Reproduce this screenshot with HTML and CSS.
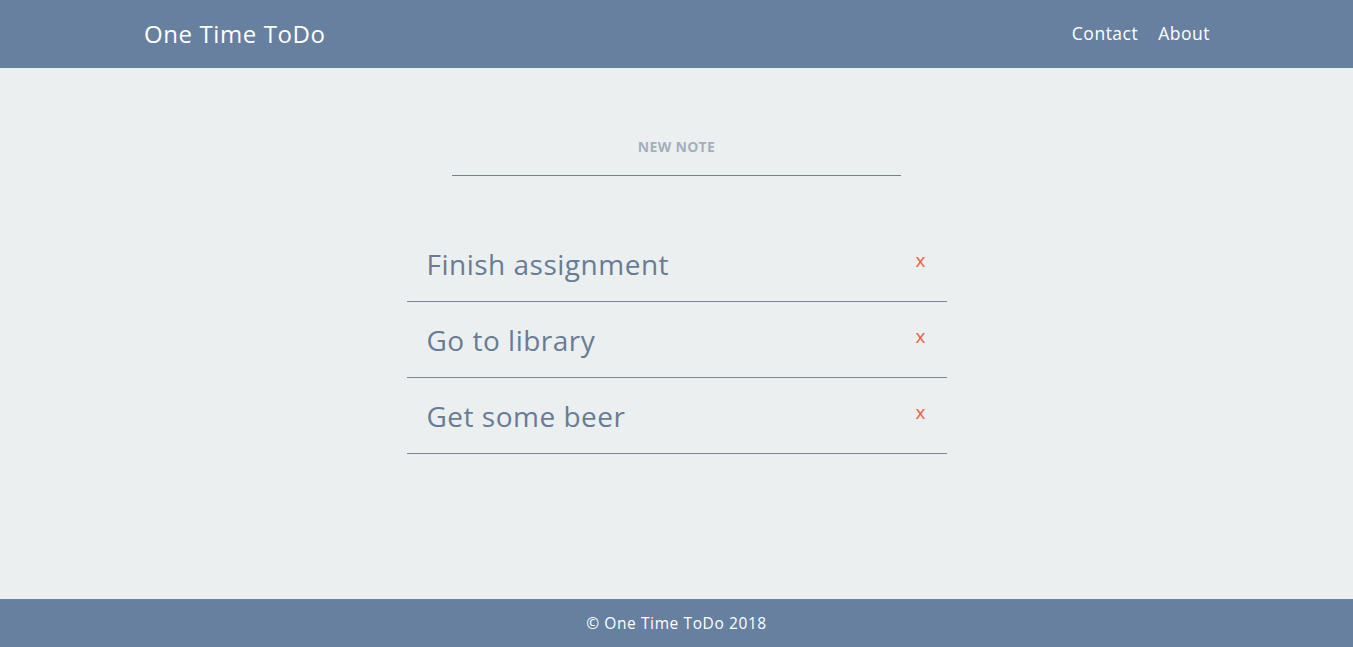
FILE: index.html
```html
<!DOCTYPE html>
<html>
<head>
<meta charset="utf-8">
<link rel="stylesheet" href="styles.css">
</head>
<body>
<header class="topbar">
  <div class="brand">One Time ToDo</div>
  <nav class="nav">
    <a class="nav-link">Contact</a>
    <a class="nav-link">About</a>
  </nav>
</header>
<main class="main">
  <div class="new-note">
    <div class="new-note-input">NEW NOTE</div>
  </div>
  <ul class="todo-list">
    <li class="todo-item"><span class="todo-text">Finish assignment</span><span class="todo-remove">x</span></li>
    <li class="todo-item"><span class="todo-text">Go to library</span><span class="todo-remove">x</span></li>
    <li class="todo-item"><span class="todo-text">Get some beer</span><span class="todo-remove">x</span></li>
  </ul>
</main>
<footer class="footer">© One Time ToDo 2018</footer>
</body>
</html>
```
FILE: styles.css
```css
* { box-sizing: border-box; }
html, body { margin: 0; padding: 0; height: 100%; }
body {
  font-family: "Open Sans", "DejaVu Sans", sans-serif;
  background: #ebeff0;
  display: flex;
  flex-direction: column;
  min-height: 647px;
}
.topbar {
  height: 68px;
  background: #67809f;
  display: flex;
  align-items: center;
  justify-content: space-between;
  padding: 0 143px 2px 144px;
  color: #fff;
}
.brand { font-size: 24px; letter-spacing: 0.6px; font-weight: 500; }
.nav { display: flex; gap: 20px; }
.nav-link { font-size: 17.5px; color: #fff; letter-spacing: 0.5px; }
.main { flex: 1; display: flex; flex-direction: column; align-items: center; padding-top: 69px; }
.new-note { width: 449px; border-bottom: 1px solid #6f8099; padding-bottom: 19px; text-align: center; }
.new-note-input { font-size: 14px; font-weight: bold; color: #a5afbb; letter-spacing: 0.3px; }
.todo-list { list-style: none; margin: 50px 0 0; padding: 0; width: 540px; }
.todo-item {
  height: 76px;
  border-bottom: 1px solid #7d8793;
  display: flex;
  align-items: center;
  justify-content: space-between;
  padding: 0 20px 0 20px;
}
.todo-text { font-size: 28px; color: #697c94; letter-spacing: 0.5px; }
.todo-remove { color: #ea5f48; font-size: 19px; margin-top: -8px; margin-right: 1px; }
.footer {
  height: 48px;
  background: #67809f;
  color: #fff;
  font-size: 15.5px;
  display: flex;
  align-items: center;
  justify-content: center;
  letter-spacing: 0.6px;
}
```
